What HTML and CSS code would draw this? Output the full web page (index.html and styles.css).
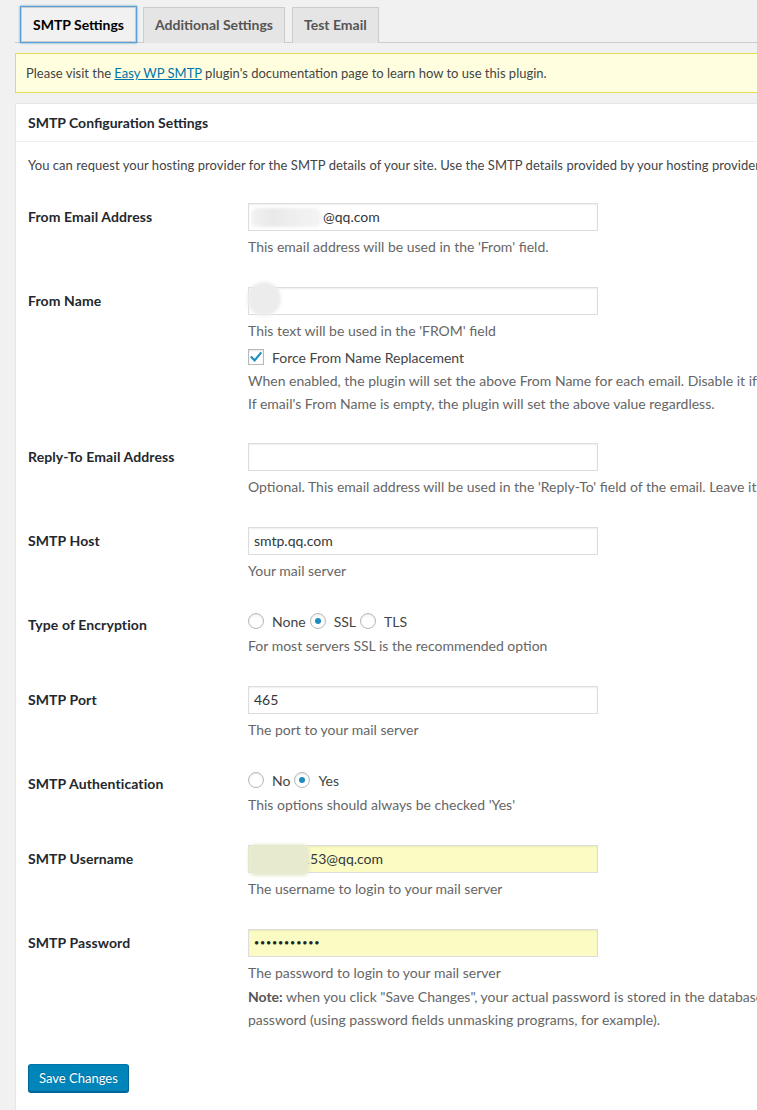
FILE: index.html
```html
<!DOCTYPE html>
<html>
<head>
<meta charset="utf-8">
<link rel="stylesheet" href="styles.css">
</head>
<body>
<div class="wrap">
  <nav class="tabs">
    <span class="tab active">SMTP Settings</span>
    <span class="tab">Additional Settings</span>
    <span class="tab">Test Email</span>
  </nav>
  <div class="notice">Please visit the <a href="#">Easy WP SMTP</a> plugin's documentation page to learn how to use this plugin.</div>
  <div class="postbox">
    <h3 class="hndle">SMTP Configuration Settings</h3>
    <div class="inside">
      <p class="intro">You can request your hosting provider for the SMTP details of your site. Use the SMTP details provided by your hosting provider to configure the following settings.</p>

      <div class="row">
        <div class="th">From Email Address</div>
        <div class="td">
          <div class="field"><span class="blob blob-email"></span><span class="pad-email">@qq.com</span></div>
          <p class="desc">This email address will be used in the 'From' field.</p>
        </div>
      </div>

      <div class="row">
        <div class="th">From Name</div>
        <div class="td">
          <div class="field"><span class="blob blob-name"></span></div>
          <p class="desc">This text will be used in the 'FROM' field</p>
          <label class="check"><span class="cb"><svg width="16" height="16" viewBox="0 0 16 16"><path d="M3.6 8.2 L6.6 11.4 L12.6 4.2" fill="none" stroke="#1e8cbe" stroke-width="2.2" stroke-linecap="square"/></svg></span>Force From Name Replacement</label>
          <p class="desc multi">When enabled, the plugin will set the above From Name for each email. Disable it if you're using contact form plugins, it will prevent the plugin from replacing form submitter's name when contact email is sent.<br>If email's From Name is empty, the plugin will set the above value regardless.</p>
        </div>
      </div>

      <div class="row">
        <div class="th">Reply-To Email Address</div>
        <div class="td">
          <div class="field"></div>
          <p class="desc">Optional. This email address will be used in the 'Reply-To' field of the email. Leave it blank to use 'From' email as the reply-to value.</p>
        </div>
      </div>

      <div class="row">
        <div class="th">SMTP Host</div>
        <div class="td">
          <div class="field">smtp.qq.com</div>
          <p class="desc">Your mail server</p>
        </div>
      </div>

      <div class="row">
        <div class="th">Type of Encryption</div>
        <div class="td">
          <div class="radios">
            <label class="radio"><span class="rb"></span>None</label>
            <label class="radio"><span class="rb on"></span>SSL</label>
            <label class="radio"><span class="rb"></span>TLS</label>
          </div>
          <p class="desc tight">For most servers SSL is the recommended option</p>
        </div>
      </div>

      <div class="row">
        <div class="th">SMTP Port</div>
        <div class="td">
          <div class="field">465</div>
          <p class="desc">The port to your mail server</p>
        </div>
      </div>

      <div class="row">
        <div class="th">SMTP Authentication</div>
        <div class="td">
          <div class="radios">
            <label class="radio"><span class="rb"></span>No</label>
            <label class="radio"><span class="rb on"></span>Yes</label>
          </div>
          <p class="desc tight">This options should always be checked 'Yes'</p>
        </div>
      </div>

      <div class="row">
        <div class="th">SMTP Username</div>
        <div class="td">
          <div class="field autofill"><span class="blob blob-user"></span><span class="pad-user">153@qq.com</span></div>
          <p class="desc">The username to login to your mail server</p>
        </div>
      </div>

      <div class="row">
        <div class="th">SMTP Password</div>
        <div class="td">
          <div class="field autofill"><span class="dots">•••••••••••</span></div>
          <p class="desc">The password to login to your mail server</p>
          <p class="desc multi note"><b>Note:</b> when you click "Save Changes", your actual password is stored in the database and then used to send emails. This field is replaced with a gag (#easywpsmtpgagpass#). This is done to prevent someone with the access to Settings page from seeing your<br>password (using password fields unmasking programs, for example).</p>
        </div>
      </div>

      <div class="submit"><button class="btn">Save Changes</button></div>
    </div>
  </div>
</div>
</body>
</html>
```
FILE: styles.css
```css
html, body {
  margin: 0;
  background: #f1f1f1;
  overflow: hidden;
}
body {
  font-family: Lato, "Noto Sans", sans-serif;
  font-size: 13px;
  color: #444;
}
.wrap {
  width: 1500px;
  padding: 7px 0 0 15px;
}
.tabs {
  display: flex;
  gap: 7px;
  padding-left: 6px;
  border-bottom: 1px solid #ccc;
  height: 35px;
}
.tab {
  box-sizing: border-box;
  height: 36px;
  border: 1px solid #ccc;
  border-bottom: none;
  background: #e5e5e5;
  padding: 5px 11px;
  font-size: 14px;
  line-height: 24px;
  font-weight: 700;
  color: #555;
}
.tab.active {
  background: #f1f1f1;
  color: #000;
  height: 35px;
  border-bottom: 1px solid #ccc;
  box-shadow: 0 0 0 1px #5b9dd9, 0 0 2px 1px rgba(30, 140, 190, .8);
}
.notice {
  margin-top: 10px;
  height: 38px;
  line-height: 38px;
  border: 1px solid #e6db55;
  background: #ffffe0;
  padding: 0 10px;
  color: #444;
}
.notice a {
  color: #0073aa;
  text-decoration: underline;
}
.postbox {
  margin-top: 10px;
  background: #fff;
  border: 1px solid #e5e5e5;
  padding-bottom: 20px;
}
.hndle {
  margin: 0;
  height: 37px;
  line-height: 38px;
  padding: 0 12px;
  font-size: 14px;
  font-weight: 700;
  color: #23282d;
  border-bottom: 1px solid #eee;
}
.inside {
  padding: 0 12px;
}
.intro {
  margin: 0;
  padding-top: 14px;
  line-height: 19px;
  white-space: nowrap;
  color: #444;
  margin-bottom: 13px;
  letter-spacing: 0.05px;
}
.row {
  display: flex;
}
.th {
  width: 220px;
  flex: none;
  box-sizing: border-box;
  padding: 20px 10px 0 0;
  font-size: 14px;
  line-height: 18px;
  font-weight: 700;
  color: #23282d;
  letter-spacing: 0.1px;
}
.td {
  padding: 15px 0 15px;
}
.field {
  position: relative;
  box-sizing: border-box;
  width: 350px;
  height: 28px;
  border: 1px solid #ddd;
  box-shadow: inset 0 1px 2px rgba(0, 0, 0, .07);
  background: #fff;
  padding: 0 5px;
  font-size: 14px;
  line-height: 26px;
  color: #32373c;
  white-space: nowrap;
}
.field.autofill {
  background: #fafcc3;
}
.blob {
  position: absolute;
  filter: blur(1.5px);
}
.blob-email {
  left: 2px;
  top: 4px;
  width: 70px;
  height: 19px;
  background: linear-gradient(90deg, #f2f2f2 0, #e9e9e9 30%, #eeeeee 60%, #f4f4f4 100%);
  border-radius: 6px;
}
.pad-email {
  padding-left: 69px;
}
.blob-name {
  left: -2px;
  top: -6px;
  width: 34px;
  height: 34px;
  border-radius: 50%;
  background: #ececec;
}
.blob-user {
  left: -1px;
  top: -2px;
  width: 62px;
  height: 32px;
  border-radius: 8px;
  background: #e8eacf;
}
.pad-user {
  padding-left: 48px;
}
.dots {
  font-size: 9px;
  letter-spacing: 0.8px;
  color: #222;
  vertical-align: top;
}
.desc {
  margin: 6px 0 0;
  font-size: 14px;
  line-height: 20px;
  color: #666;
  white-space: nowrap;
}
.desc.tight {
  margin-top: 5px;
}
.desc.multi {
  margin-top: 3px;
  line-height: 23px;
  margin-bottom: -2px;
}
.desc.note {
  margin-top: 2px;
  margin-bottom: 0;
}
.desc b {
  font-weight: 700;
  color: #555;
}
.check {
  display: flex;
  align-items: center;
  margin-top: 7px;
  height: 18px;
  font-size: 14px;
  color: #444;
}
.cb {
  box-sizing: border-box;
  width: 16px;
  height: 16px;
  border: 1px solid #b4b9be;
  background: #fff;
  box-shadow: inset 0 1px 2px rgba(0, 0, 0, .1);
  margin-right: 8px;
  position: relative;
}
.cb svg {
  position: absolute;
  left: -1px;
  top: -1px;
}
.radios {
  display: flex;
  align-items: center;
  height: 20px;
  font-size: 14px;
  color: #444;
}
.radio {
  display: flex;
  align-items: center;
  margin-right: 4px;
}
.rb {
  box-sizing: border-box;
  width: 16px;
  height: 16px;
  border-radius: 50%;
  border: 1px solid #b4b9be;
  background: #fff;
  box-shadow: inset 0 1px 2px rgba(0, 0, 0, .1);
  margin-right: 8px;
  display: flex;
  align-items: center;
  justify-content: center;
}
.rb.on::before {
  content: "";
  width: 6px;
  height: 6px;
  border-radius: 50%;
  background: #1e8cbe;
}
.submit {
  padding-top: 18px;
}
.btn {
  box-sizing: border-box;
  height: 28px;
  padding: 0 10px;
  font-family: Lato, "Noto Sans", sans-serif;
  font-size: 13px;
  line-height: 26px;
  color: #fff;
  background: #0085ba;
  border: 1px solid;
  border-color: #0073aa #006799 #006799;
  border-radius: 3px;
  box-shadow: 0 1px 0 #006799;
  text-shadow: 0 -1px 1px #006799;
}
```
